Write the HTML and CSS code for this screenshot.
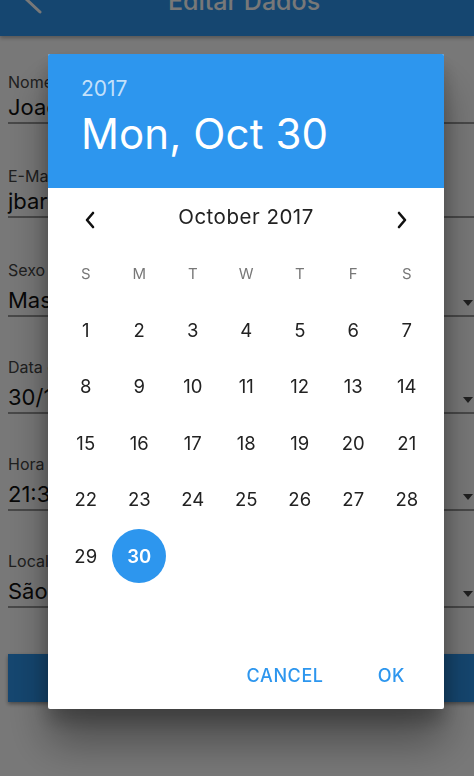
FILE: index.html
```html
<!DOCTYPE html>
<html lang="pt">
<head>
<meta charset="utf-8">
<title>Editar Dados</title>
<link rel="stylesheet" href="styles.css">
</head>
<body>
<div class="app">
  <header class="appbar">
    <svg class="back" width="22" height="30" viewBox="0 0 22 30"><path d="M18 2 L4 15 L18 28" fill="none" stroke="#fff" stroke-width="3" stroke-linecap="round" stroke-linejoin="round"/></svg>
    <div class="title">Editar Dados</div>
    <div class="spacer"></div>
  </header>
  <main class="form">
    <div class="field"><div class="label">Nome</div><div class="value-row"><span class="value">Joao Barg</span></div></div>
    <div class="field"><div class="label">E-Mail</div><div class="value-row"><span class="value">jbarg@email.com</span></div></div>
    <div class="field select"><div class="label">Sexo</div><div class="value-row"><span class="value">Masculino</span><span class="caret"></span></div></div>
    <div class="field select"><div class="label">Data de Nascimento</div><div class="value-row"><span class="value">30/10/2017</span><span class="caret"></span></div></div>
    <div class="field select"><div class="label">Hora</div><div class="value-row"><span class="value">21:30</span><span class="caret"></span></div></div>
    <div class="field select"><div class="label">Local</div><div class="value-row"><span class="value">São Paulo</span><span class="caret"></span></div></div>
    <button class="save">SALVAR</button>
  </main>
</div>

<div class="overlay">
  <div class="dialog">
    <div class="dlg-head">
      <div class="year">2017</div>
      <div class="date">Mon, Oct 30</div>
    </div>
    <div class="dlg-body">
      <div class="nav">
        <svg class="chev" width="14" height="18" viewBox="0 0 14 18"><path d="M10 2 L4 9 L10 16" fill="none" stroke="#111" stroke-width="2.6" stroke-linecap="round" stroke-linejoin="round"/></svg>
        <div class="month">October 2017</div>
        <svg class="chev" width="14" height="18" viewBox="0 0 14 18"><path d="M4 2 L10 9 L4 16" fill="none" stroke="#111" stroke-width="2.6" stroke-linecap="round" stroke-linejoin="round"/></svg>
      </div>
      <div class="grid">
        <div class="wd">S</div><div class="wd">M</div><div class="wd">T</div><div class="wd">W</div><div class="wd">T</div><div class="wd">F</div><div class="wd">S</div>
        <div class="day">1</div><div class="day">2</div><div class="day">3</div><div class="day">4</div><div class="day">5</div><div class="day">6</div><div class="day">7</div>
        <div class="day">8</div><div class="day">9</div><div class="day">10</div><div class="day">11</div><div class="day">12</div><div class="day">13</div><div class="day">14</div>
        <div class="day">15</div><div class="day">16</div><div class="day">17</div><div class="day">18</div><div class="day">19</div><div class="day">20</div><div class="day">21</div>
        <div class="day">22</div><div class="day">23</div><div class="day">24</div><div class="day">25</div><div class="day">26</div><div class="day">27</div><div class="day">28</div>
        <div class="day">29</div><div class="day"><span class="sel">30</span></div>
      </div>
      <div class="actions">
        <button class="act">CANCEL</button>
        <button class="act">OK</button>
      </div>
    </div>
  </div>
</div>
</body>
</html>
```
FILE: styles.css
```css
html, body {
  margin: 0;
  padding: 0;
}
body {
  width: 474px;
  height: 776px;
  overflow: hidden;
  background: #fff;
  font-family: Inter, "Noto Sans", "Liberation Sans", sans-serif;
  color: #000;
}
.app {
  width: 474px;
  height: 776px;
  display: flex;
  flex-direction: column;
}
.appbar {
  height: 36px;
  flex: none;
  background: #2d96ee;
  display: flex;
  align-items: flex-end;
  overflow: hidden;
  padding-left: 22px;
  box-shadow: 0 2px 4px rgba(0,0,0,0.3);
  position: relative;
  z-index: 1;
}
.back {
  flex: none;
  margin-bottom: 22px;
}
.title {
  flex: 1;
  text-align: center;
  color: #fff;
  font-size: 25px;
  font-weight: 500;
  line-height: 32px;
  padding-bottom: 19px;
  white-space: nowrap;
}
.spacer {
  width: 30px;
  flex: none;
}
.form {
  padding: 36px 0 0 8px;
  display: flex;
  flex-direction: column;
}
.field {
  flex: none;
}
.field + .field {
  margin-top: 42px;
}
.label {
  font-size: 16px;
  line-height: 20px;
  color: #444;
  white-space: nowrap;
}
.value-row {
  display: flex;
  justify-content: space-between;
  border-bottom: 2px solid #9a9a9a;
  height: 28px;
  margin-top: 2px;
}
.select .value-row {
  margin-top: 7px;
}
.select + .select {
  margin-top: 40px;
}
.value {
  font-size: 22px;
  line-height: 26px;
  color: #111;
  white-space: nowrap;
}
.caret {
  align-self: flex-end;
  width: 0;
  height: 0;
  border-left: 5px solid transparent;
  border-right: 5px solid transparent;
  border-top: 6px solid #444;
  margin: 0 1px 9px 0;
}
.save {
  margin-top: 46px;
  height: 48px;
  width: 480px;
  border: none;
  background: #2d96ee;
  color: #fff;
  font: 500 18px Inter, sans-serif;
  box-shadow: 0 2px 4px rgba(0,0,0,0.4);
}
.overlay {
  position: fixed;
  inset: 0;
  background: rgba(0,0,0,0.53);
  padding: 54px 0 0 48px;
  z-index: 10;
}
.dialog {
  width: 396px;
  height: 655px;
  background: #fff;
  border-radius: 2px;
  display: flex;
  flex-direction: column;
  overflow: hidden;
  box-shadow: 0 34px 44px rgba(0,0,0,0.36), 0 12px 18px rgba(0,0,0,0.22);
}
.dlg-head {
  height: 134px;
  flex: none;
  background: #2d96ee;
  box-sizing: border-box;
  padding: 22px 0 0 33px;
}
.year {
  font-size: 21px;
  line-height: 26px;
  color: rgba(255,255,255,0.72);
}
.date {
  margin-top: 4px;
  font-size: 42px;
  line-height: 56px;
  color: #fff;
  letter-spacing: 0.1px;
}
.dlg-body {
  flex: 1;
  display: flex;
  flex-direction: column;
}
.nav {
  height: 57px;
  display: flex;
  align-items: center;
  justify-content: space-between;
  padding: 0 35px 0 35px;
}
.chev {
  margin-top: 6px;
}
.month {
  font-size: 20.5px;
  color: #222;
  letter-spacing: 0.5px;
}
.grid {
  display: grid;
  grid-template-columns: repeat(7, 53.5px);
  grid-template-rows: 56px repeat(5, 56.5px);
  padding: 0 11px;
}
.wd {
  display: flex;
  align-items: center;
  justify-content: center;
  font-size: 15px;
  color: #777;
}
.day {
  display: flex;
  align-items: center;
  justify-content: center;
  font-size: 18.5px;
  color: #222;
  padding-top: 1px;
}
.sel {
  width: 54px;
  height: 54px;
  border-radius: 50%;
  background: #2d96ee;
  color: #fff;
  font-weight: 600;
  display: flex;
  align-items: center;
  justify-content: center;
  flex: none;
}
.actions {
  margin-top: auto;
  display: flex;
  justify-content: flex-end;
  gap: 54px;
  padding: 0 39px 21px 0;
}
.act {
  border: none;
  background: none;
  padding: 0;
  font: 500 18px/24px Inter, "Noto Sans", sans-serif;
  color: #2d96ee;
  letter-spacing: 0.6px;
}
```
